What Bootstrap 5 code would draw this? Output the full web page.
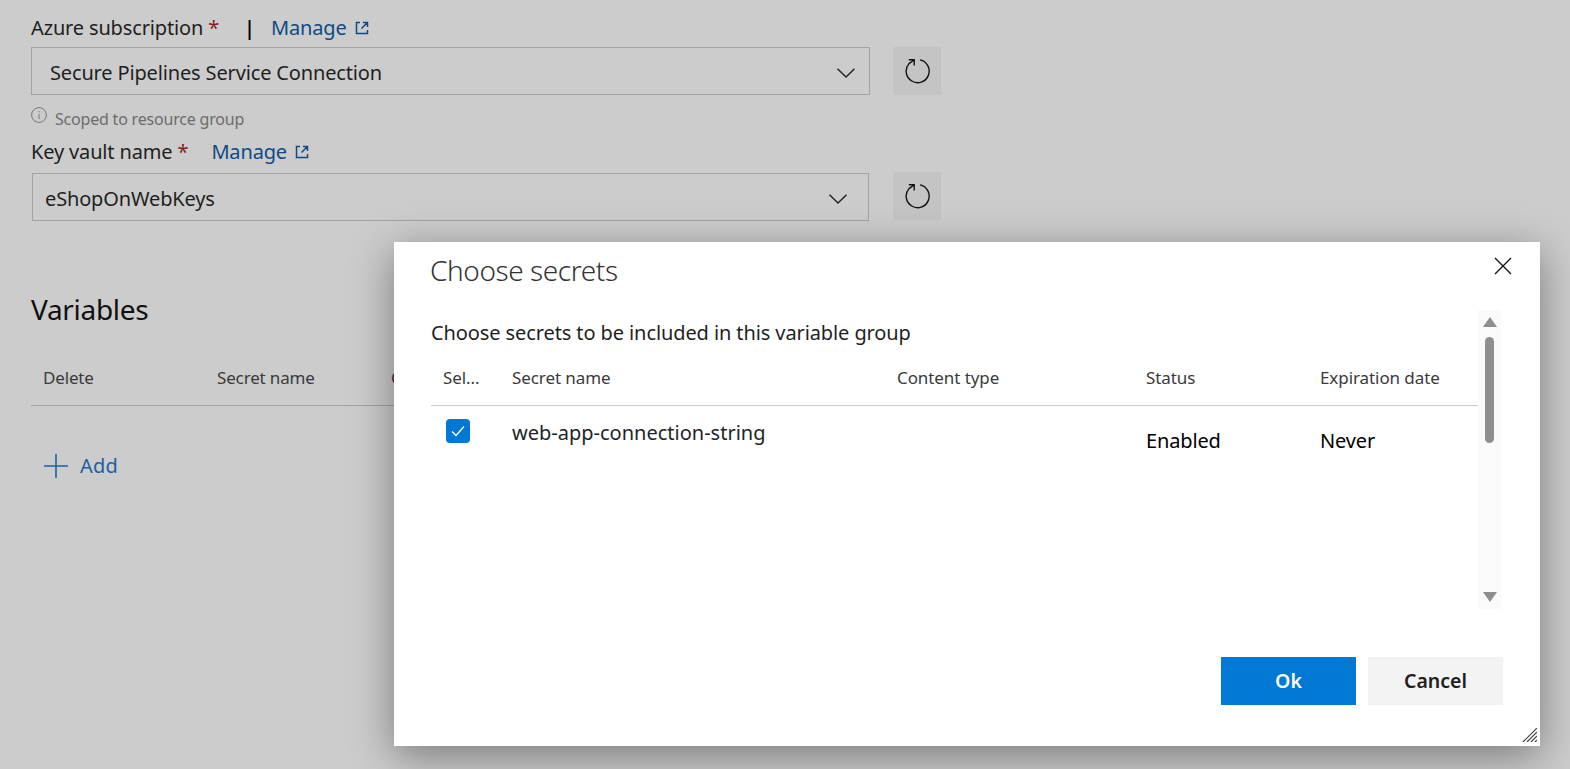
<!DOCTYPE html>
<html lang="en">
<head>
    <meta charset="UTF-8">
    <meta name="viewport" content="width=device-width, initial-scale=1.0">
    <title>Choose secrets</title>
    <link rel="stylesheet" href="https://cdn.jsdelivr.net/npm/bootstrap@5.3.0/dist/css/bootstrap.min.css">
    <style>
        html, body { height: 100%; }
        body { background: #cccccc; font-family: "Noto Sans", "Open Sans", sans-serif; color: #1f1f1f; overflow: hidden; font-size: 20px; letter-spacing: -.15px; }
        .page-wrap { padding: 13px 0 0 31px; width: 1240px; }
        .field-label { height: 30px; line-height: 30px; }
        .req { color: #8a1a1a; }
        .manage-link { color: #0f4a85; text-decoration: none; }
        .sep { color: #000; font-weight: 600; margin: 0 16px 0 25px; }
        .manage-gap { margin-left: 23px; }
        .box-row { height: 48px; margin-top: 4px; }
        .box-row.second { margin-top: 6px; }
        .fake-select { width: 839px; height: 48px; border: 1px solid #a3a3a3; padding: 3px 14px 0 18px; flex-shrink: 0; }
        .fake-select.second { width: 837px; margin-left: 1px; padding: 3px 21px 0 12px; }
        .refresh-btn { width: 48px; height: 48px; background: #c4c4c4; border: 0; padding: 0; margin-left: 23px; flex-shrink: 0; }
        .refresh-btn.second { margin-left: 24px; margin-top: -1px; }
        .scope-note { height: 42px; padding-top: 12px; color: #6c6c6c; font-size: 16px; letter-spacing: -.2px; line-height: 24px; }
        .vars-title { font-size: 28px; font-weight: 400; margin: 70px 0 0; line-height: 36px; color: #111; letter-spacing: -.3px; }
        .vars-head { height: 60px; margin-top: 19px; border-bottom: 1px solid #a3a3a3; color: #3a3a3a; font-size: 17px; padding: 20px 0 0 12px; line-height: 24px; letter-spacing: -.15px; }
        .var-col { width: 174px; flex-shrink: 0; }
        .add-link { color: #1f5fa3; margin: 43px 0 0 13px; line-height: 34px; gap: 12px; letter-spacing: .2px; }
        .secrets-dialog { position: absolute; left: 394px; top: 242px; width: 1146px; height: 504px; background: #fff; box-shadow: 0 10px 40px rgba(0,0,0,.4); padding: 0 0 0 37px; }
        .dialog-title { font-size: 28px; font-weight: 300; margin: 10px 0 0 -1px; line-height: 36px; color: #333; letter-spacing: -.42px; }
        .dialog-close { position: absolute; left: 1100px; top: 15px; width: 18px; height: 18px; padding: 0; background: none; border: 0; display: block; }
        .dialog-close svg { display: block; }
        .dialog-sub { margin: 30px 0 0; line-height: 30px; letter-spacing: -.1px; }
        .secrets-body { display: flex; }
        .secrets-table { width: 1047px; table-layout: fixed; margin: 0; }
        .secrets-table th { font-weight: 400; font-size: 17px; color: #3a3a3a; padding: 16px 0 14px 12px; height: 57px; border-bottom: 1px solid #c8c8c8; white-space: nowrap; line-height: 26px; letter-spacing: -.08px; }
        .secrets-table td { border: 0; padding: 0 0 0 12px; }
        .cell-name { padding-top: 12px !important; line-height: 30px; letter-spacing: 0; }
        .cell-plain { padding-top: 20px !important; line-height: 30px; color: #000; }
        .check-box { display: flex; align-items: center; justify-content: center; width: 24px; height: 24px; border-radius: 4px; background: #0078d4; margin: 13px 0 0 3px; }
        .scroll-track { position: absolute; left: 1084px; top: 68px; width: 23px; height: 299px; background: #fafafa; }
        .scroll-thumb { position: absolute; left: 7px; top: 27px; width: 9px; height: 106px; background: #8e8e8e; border-radius: 5px; }
        .arrow-up, .arrow-down { position: absolute; left: 5px; width: 0; height: 0; border-left: 7px solid transparent; border-right: 7px solid transparent; }
        .arrow-up { top: 7px; border-bottom: 10px solid #8e8e8e; }
        .arrow-down { top: 282px; border-top: 10px solid #8e8e8e; }
        .dialog-actions { position: absolute; left: 827px; top: 415px; gap: 12px; }
        .action-btn { width: 135px; height: 48px; border: 0; border-radius: 0; font-weight: 600; font-size: 19.5px; padding: 0; }
        .action-ok { background: #0078d4; color: #fff; }
        .action-cancel { background: #f3f3f3; color: #1f1f1f; }
        .resize-grip { position: absolute; right: 3px; bottom: 4px; display: block; }
    </style>
</head>
<body>
    <div class="page-wrap">
        <div class="field-label d-flex">
            <span>Azure subscription <span class="req">*</span></span>
            <span class="sep">|</span>
            <a class="manage-link d-flex align-items-center" href="#">Manage
                <svg class="ms-2" width="14" height="14" viewBox="0 0 14 14" fill="none" stroke="#0f4a85" stroke-width="1.5"><path d="M5 1.5H1.5v11h11V9M8 1.5h4.5V6M12.2 1.8 6.5 7.5"/></svg>
            </a>
        </div>
        <div class="box-row d-flex">
            <div class="fake-select d-flex align-items-center justify-content-between">
                <span>Secure Pipelines Service Connection</span>
                <svg width="18" height="10" viewBox="0 0 18 10" fill="none" stroke="#222" stroke-width="1.4"><path d="M.5.7 9 9 17.5.7"/></svg>
            </div>
            <button class="refresh-btn d-flex align-items-center justify-content-center" type="button" aria-label="Refresh">
                <svg width="26" height="26" viewBox="0 0 26 26" fill="none" stroke="#111" stroke-width="1.4"><path d="M16 1.9A11.5 11.5 0 1 1 5 5.6L10 2M4.8 1.8h5.4V7.6"/></svg>
            </button>
        </div>
        <div class="scope-note d-flex">
            <svg class="me-2" width="16" height="16" viewBox="0 0 16 16" fill="none" stroke="#777" stroke-width="1"><circle cx="8" cy="8" r="7.4"/><path d="M8 7v5M8 4v1.4"/></svg>
            <span>Scoped to resource group</span>
        </div>
        <div class="field-label d-flex">
            <span>Key vault name <span class="req">*</span></span>
            <a class="manage-link manage-gap d-flex align-items-center" href="#">Manage
                <svg class="ms-2" width="14" height="14" viewBox="0 0 14 14" fill="none" stroke="#0f4a85" stroke-width="1.5"><path d="M5 1.5H1.5v11h11V9M8 1.5h4.5V6M12.2 1.8 6.5 7.5"/></svg>
            </a>
        </div>
        <div class="box-row second d-flex">
            <div class="fake-select second d-flex align-items-center justify-content-between">
                <span>eShopOnWebKeys</span>
                <svg width="18" height="10" viewBox="0 0 18 10" fill="none" stroke="#222" stroke-width="1.4"><path d="M.5.7 9 9 17.5.7"/></svg>
            </div>
            <button class="refresh-btn second d-flex align-items-center justify-content-center" type="button" aria-label="Refresh">
                <svg width="26" height="26" viewBox="0 0 26 26" fill="none" stroke="#111" stroke-width="1.4"><path d="M16 1.9A11.5 11.5 0 1 1 5 5.6L10 2M4.8 1.8h5.4V7.6"/></svg>
            </button>
        </div>
        <h2 class="vars-title">Variables</h2>
        <div class="vars-head d-flex">
            <span class="var-col">Delete</span>
            <span class="var-col">Secret name</span>
            <span class="var-col">C</span>
        </div>
        <div class="add-link d-flex align-items-center">
            <svg width="24" height="24" viewBox="0 0 24 24" fill="none" stroke="#1f5fa3" stroke-width="1.6"><path d="M0 12h24M12 0v24"/></svg>
            <span>Add</span>
        </div>
    </div>

    <div class="secrets-dialog">
        <h5 class="dialog-title">Choose secrets</h5>
        <button class="dialog-close" type="button" aria-label="Close">
            <svg width="18" height="18" viewBox="0 0 18 18" fill="none" stroke="#111" stroke-width="1.3"><path d="M1 1l16 16M17 1 1 17"/></svg>
        </button>
        <p class="dialog-sub">Choose secrets to be included in this variable group</p>
        <div class="secrets-body">
            <table class="table secrets-table">
                <colgroup>
                    <col style="width:69px"><col style="width:385px"><col style="width:249px"><col style="width:174px"><col>
                </colgroup>
                <thead>
                    <tr><th>Sel...</th><th>Secret name</th><th>Content type</th><th>Status</th><th>Expiration date</th></tr>
                </thead>
                <tbody>
                    <tr>
                        <td>
                            <span class="check-box">
                                <svg width="14" height="12" viewBox="0 0 14 12" fill="none" stroke="#fff" stroke-width="1.3"><path d="M1 6.5l4 4 8-9"/></svg>
                            </span>
                        </td>
                        <td class="cell-name">web-app-connection-string</td>
                        <td></td>
                        <td class="cell-plain">Enabled</td>
                        <td class="cell-plain">Never</td>
                    </tr>
                </tbody>
            </table>
        </div>
        <div class="scroll-track">
            <span class="arrow-up"></span>
            <span class="scroll-thumb"></span>
            <span class="arrow-down"></span>
        </div>
        <div class="dialog-actions d-flex">
            <button class="btn action-btn action-ok" type="button">Ok</button>
            <button class="btn action-btn action-cancel" type="button">Cancel</button>
        </div>
        <svg class="resize-grip" width="15" height="14" viewBox="0 0 15 14" fill="none" stroke="#444" stroke-width="1.2"><path d="M1 14 15 0M5 14 15 4M9 14l6-6M13 14l2-2"/></svg>
    </div>

    <script src="https://cdn.jsdelivr.net/npm/bootstrap@5.3.0/dist/js/bootstrap.bundle.min.js"></script>
</body>
</html>
